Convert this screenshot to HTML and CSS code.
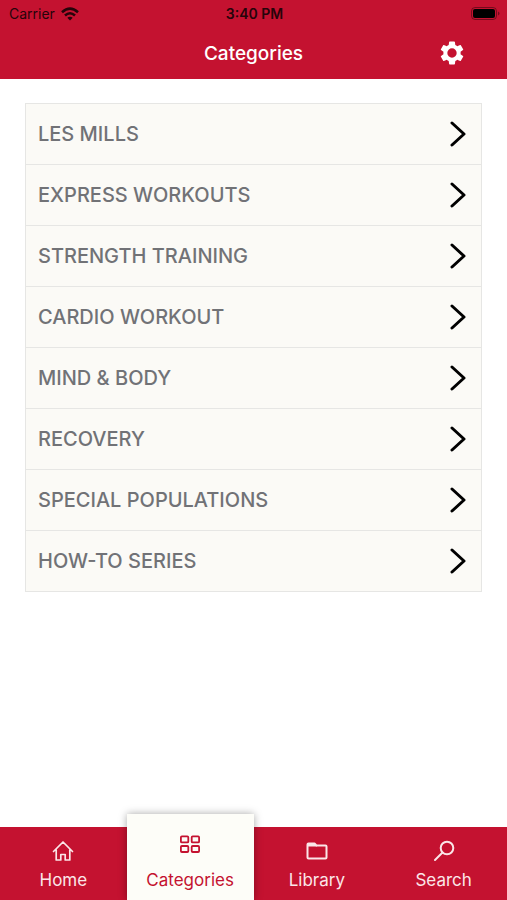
FILE: index.html
```
<!DOCTYPE html>
<html lang="en">
<head>
<meta charset="utf-8">
<meta name="viewport" content="width=device-width, initial-scale=1">
<title>Categories</title>
<link rel="stylesheet" href="styles.css">
</head>
<body>
<svg class="symbols" aria-hidden="true">
  <symbol id="chevron" viewBox="0 0 16 26"><path d="M2 2l12 11L2 24" fill="none" stroke="currentColor" stroke-width="3" stroke-linecap="round" stroke-linejoin="round"/></symbol>
</svg>
<header class="header">
  <div class="status">
    <span class="carrier">Carrier
      <svg class="wifi" viewBox="0 0 18 14" aria-hidden="true"><g fill="none" stroke="currentColor" stroke-width="2.6"><path d="M1 5.200Q9-1.800 17 5.200"/><path d="M4 8.500Q9 4 14 8.500"/></g><path d="M6.300 10.700Q9 8.600 11.700 10.700L9 13.600z" fill="currentColor"/></svg>
    </span>
    <span class="time">3:40 PM</span>
    <svg class="battery" viewBox="0 0 29 13" aria-hidden="true"><rect x=".5" y=".5" width="25" height="12" rx="3.500" fill="none" stroke="currentColor" opacity=".4"/><rect x="2" y="2" width="22" height="9" rx="2" fill="currentColor"/><path d="M27 4.500q1.500.5 1.500 2t-1.500 2z" fill="currentColor" opacity=".4"/></svg>
  </div>
  <div class="titlebar">
    <h1 class="title">Categories</h1>
    <button class="settings" type="button" aria-label="Settings">
      <svg viewBox="2 2 20 20" aria-hidden="true"><path fill="currentColor" d="M19.140 12.940c.04-.3.06-.61.06-.94s-.02-.64-.07-.94l2.030-1.580a.49.49 0 0 0 .12-.61l-1.920-3.320a.49.49 0 0 0-.59-.22l-2.390.96a7 7 0 0 0-1.620-.94l-.36-2.540a.48.48 0 0 0-.48-.41h-3.840a.48.48 0 0 0-.47.41l-.36 2.540a7.300 7.300 0 0 0-1.620.94l-2.390-.96a.48.48 0 0 0-.59.22L2.740 8.870a.48.48 0 0 0 .12.610l2.030 1.580a6.300 6.300 0 0 0 0 1.880l-2.030 1.580a.49.49 0 0 0-.12.610l1.920 3.320c.12.220.37.290.59.220l2.390-.96c.5.380 1.030.7 1.620.94l.36 2.540c.05.240.24.410.48.410h3.840c.24 0 .44-.17.470-.41l.36-2.540a7 7 0 0 0 1.620-.94l2.390.96c.22.080.47 0 .59-.22l1.920-3.320a.48.48 0 0 0-.12-.61zM12 15.900a3.900 3.900 0 1 1 0-7.800 3.900 3.900 0 0 1 0 7.800z"/></svg>
    </button>
  </div>
</header>
<main class="main">
  <ul class="list">
    <li><a class="row" href="#les-mills">LES MILLS<svg class="chevron" aria-hidden="true"><use href="#chevron"/></svg></a></li>
    <li><a class="row" href="#express">EXPRESS WORKOUTS<svg class="chevron" aria-hidden="true"><use href="#chevron"/></svg></a></li>
    <li><a class="row" href="#strength">STRENGTH TRAINING<svg class="chevron" aria-hidden="true"><use href="#chevron"/></svg></a></li>
    <li><a class="row" href="#cardio">CARDIO WORKOUT<svg class="chevron" aria-hidden="true"><use href="#chevron"/></svg></a></li>
    <li><a class="row" href="#mind-body">MIND &amp; BODY<svg class="chevron" aria-hidden="true"><use href="#chevron"/></svg></a></li>
    <li><a class="row" href="#recovery">RECOVERY<svg class="chevron" aria-hidden="true"><use href="#chevron"/></svg></a></li>
    <li><a class="row" href="#special">SPECIAL POPULATIONS<svg class="chevron" aria-hidden="true"><use href="#chevron"/></svg></a></li>
    <li><a class="row" href="#how-to">HOW-TO SERIES<svg class="chevron" aria-hidden="true"><use href="#chevron"/></svg></a></li>
  </ul>
</main>
<nav class="tabs">
  <a class="tab" href="#home">
    <svg class="icon" viewBox="0 0 22 22" aria-hidden="true"><path d="M1.500 11.500L11 2l9.500 9.500M4.200 10v10h4.600v-5.500h4.400V20h4.600V10" fill="none" stroke="currentColor" stroke-width="1.700" stroke-linecap="round" stroke-linejoin="round"/></svg>
    Home
  </a>
  <a class="tab active" href="#categories" aria-current="page">
    <svg class="icon" viewBox="0 0 22 22" aria-hidden="true"><g fill="none" stroke="currentColor" stroke-width="1.800"><rect x="1.900" y="3.400" width="7.400" height="6" rx="1"/><rect x="12.700" y="3.400" width="7.400" height="6" rx="1"/><rect x="1.900" y="13" width="7.400" height="6" rx="1"/><rect x="12.700" y="13" width="7.400" height="6" rx="1"/></g></svg>
    Categories
  </a>
  <a class="tab" href="#library">
    <svg class="icon" viewBox="0 0 22 22" aria-hidden="true"><path d="M1.500 17.500v-13q0-1 1-1h6l2 2h9q1 0 1 1v11q0 1-1 1h-17q-1 0-1-1z" fill="none" stroke="currentColor" stroke-width="2" stroke-linejoin="round"/><path d="M1.500 3h7l2.500 3.500H1.500z" fill="currentColor"/></svg>
    Library
  </a>
  <a class="tab" href="#search">
    <svg class="icon" viewBox="0 0 22 22" aria-hidden="true"><g fill="none" stroke="currentColor" stroke-width="2" stroke-linecap="round"><circle cx="14" cy="8" r="6.300"/><path d="M9.500 12.500L2 20"/></g></svg>
    Search
  </a>
</nav>
</body>
</html>
```
FILE: styles.css
```
* {
  box-sizing: border-box;
}

body {
  margin: 0;
  min-height: 100vh;
  display: flex;
  flex-direction: column;
  background: #fff;
  font-family: Inter, "Liberation Sans", sans-serif;
}

a {
  color: inherit;
  text-decoration: none;
}

.symbols {
  position: absolute;
  width: 0;
  height: 0;
}

.header {
  background: #c41230;
  color: #fff;
}

.status {
  display: grid;
  grid-template-columns: 1fr auto 1fr;
  align-items: center;
  height: 27px;
  padding: 0 7px 0 9px;
  font-size: 14px;
  color: #26040a;
}

.carrier {
  display: flex;
  align-items: center;
  gap: 6px;
}

.wifi {
  width: 18px;
  height: 14px;
}

.time {
  font-weight: 600;
}

.battery {
  justify-self: end;
  width: 29px;
  height: 13px;
  color: #000;
}

.titlebar {
  display: grid;
  grid-template-columns: 1fr auto 1fr;
  align-items: center;
  height: 52px;
  padding: 0 42px;
}

.title {
  grid-column: 2;
  margin: 0;
  font-size: 19px;
  font-weight: 500;
}

.settings {
  justify-self: end;
  width: 26px;
  height: 26px;
  padding: 1px;
  border: 0;
  background: none;
  color: #fff;
}

.settings svg {
  display: block;
  width: 24px;
  height: 24px;
}

.main {
  flex: 1;
  padding: 24px 25px;
}

.list {
  margin: 0;
  padding: 0;
  list-style: none;
  border: 1px solid #e6e6e4;
  background: #fbfaf6;
}

.list li + li {
  border-top: 1px solid #e6e6e4;
}

.row {
  display: flex;
  align-items: center;
  justify-content: space-between;
  height: 60px;
  padding: 0 15px 0 12px;
  font-size: 20px;
  font-weight: 500;
  color: #717276;
}

.chevron {
  width: 16px;
  height: 26px;
  color: #000;
}

.tabs {
  position: sticky;
  bottom: 0;
  display: grid;
  grid-template-columns: repeat(4, 1fr);
  grid-template-rows: 73px;
  align-items: end;
  background: #c41230;
}

.tab {
  display: flex;
  flex-direction: column;
  align-items: center;
  justify-content: space-between;
  height: 73px;
  padding: 13px 0 9px;
  font-size: 17px;
  line-height: 22px;
  color: #fbe6e8;
}

.tab.active {
  height: 86px;
  padding-top: 19px;
  background: #fdfdf8;
  color: #c41230;
  box-shadow: 0 0 8px rgba(0, 0, 0, 0.35);
}

.icon {
  width: 22px;
  height: 22px;
}
```
